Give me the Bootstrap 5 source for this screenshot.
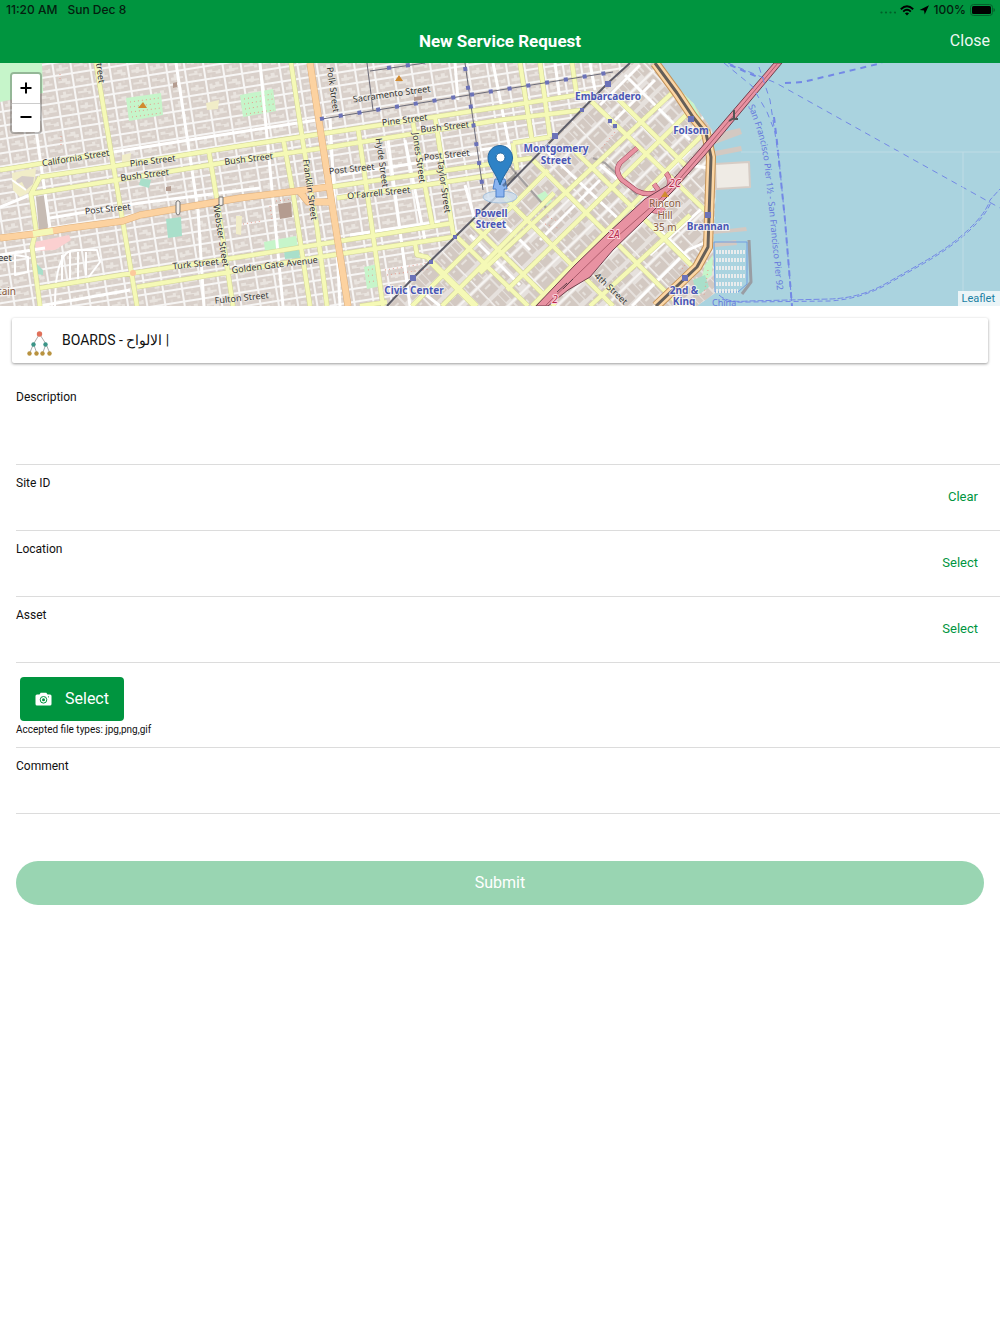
<!DOCTYPE html>
<html lang="en">
<head>
<meta charset="utf-8">
<meta name="viewport" content="width=device-width, initial-scale=1">
<title>New Service Request</title>
<link href="https://cdn.jsdelivr.net/npm/bootstrap@5.3.0/dist/css/bootstrap.min.css" rel="stylesheet">
<style>
  :root { --brand: #00953f; }
  body { font-family: Roboto, "Noto Sans", sans-serif; font-size: 14px; color: #111; background: #fff; }
  .status-bar { height: 20px; padding: 0 5px 0 6px; font: 500 12px/20px Inter, sans-serif; color: #04200f; }
  .clock-set { gap: 10px; }
  .app-head { background: var(--brand); }
  .title-bar { height: 43px; display: grid; grid-template-columns: 1fr auto 1fr; align-items: center; padding: 0 10px 2px; }
  .title-bar h1 { font-size: 17px; line-height: 20px; font-weight: 700; margin: 0; color: #fff; grid-column: 2; }
  .close-btn { color: #fff; font-size: 16px; line-height: 20px; padding: 0; border: 0; justify-self: end; opacity: .93; }
  .map-box { height: 243px; background: #aad3df; overflow: hidden; }
  .map-box > svg { width: 100%; height: 100%; display: block; }
  .zoom-ctl { top: 9px; left: 10px; border: 2px solid rgba(0,0,0,.25); border-radius: 4px; background-clip: padding-box; overflow: hidden; }
  .zoom-ctl button { width: 28px; height: 29px; border: 0; background: #fff; color: #000; display: grid; place-items: center; padding: 0 0 2px; }
  .zoom-ctl button + button { border-top: 1px solid #ccc; }
  .credit { right: 0; bottom: 0; background: rgba(255,255,255,.75); font-size: 11px; line-height: 15px; padding: 0 5px 0 4px; color: #1a7fa3; text-decoration: none; }
  .type-card { margin: 12px 12px 0; height: 45px; border: 0; border-radius: 2px; background: #fff; box-shadow: 0 1px 3px rgba(0,0,0,.4); padding: 0 14px; gap: 9px; color: #111; font-size: 14px; text-align: left; }
  .type-card svg { margin-top: 6px; }
  .field-row { margin-left: 16px; padding: 11px 22px 0 0; height: 66px; border-bottom: 1px solid #dcdcdc; }
  .field-row label { font-size: 12px; line-height: 14px; }
  .field-row .form-control { border: 0; padding: 0; border-radius: 0; font-size: 14px; box-shadow: none; background: transparent; resize: none; }
  .row-tall { height: 95px; margin-top: 7px; padding-top: 20px; }
  .row-files { height: 85px; padding: 14px 0 0; }
  .text-action { border: 0; background: none; color: var(--brand); font-size: 13px; line-height: 16px; padding: 0; margin-top: 13px; }
  .pick-btn { background: var(--brand); color: #fff; border: 0; border-radius: 4px; height: 44px; margin-left: 4px; padding: 0 15px; gap: 13px; font-size: 16px; }
  .hint { font-size: 10px; line-height: 12px; margin: 3px 0 0; }
  .send-btn { display: block; margin: 47px 16px 0; height: 44px; border: 0; border-radius: 22px; background: #99d5b2; color: #fff; font-size: 16px; }
  /* map drawing */
  .map-box path, .map-box line { fill: none; stroke-linejoin: round; }
  .map-box .solid { stroke: none; }
  .yc { stroke: #d3d698; stroke-width: 5; } .yf { stroke: #f5f9b6; stroke-width: 4; }
  .oc { stroke: #dfb07c; stroke-width: 7; } .of { stroke: #fcd2a0; stroke-width: 6; }
  .wf { stroke: #fff; stroke-width: 3; }
  .rail { stroke: #6b6b78; stroke-width: 1; } .ferry { stroke: #7388e6; stroke-width: 1; stroke-dasharray: 6 5; }
  .st { font: 9px "Noto Sans", sans-serif; fill: #333; text-anchor: middle; stroke: #f8f6ee; stroke-width: 1px; stroke-opacity: .6; paint-order: stroke; }
  .stn { font: bold 10px "Noto Sans", sans-serif; fill: #4a57b5; text-anchor: middle; stroke: #fff; stroke-width: 2px; stroke-opacity: .7; paint-order: stroke; }
  .hill { font: 10px "Noto Sans", sans-serif; fill: #8a5d3f; text-anchor: middle; stroke: #fff; stroke-width: 2px; stroke-opacity: .5; paint-order: stroke; }
  .hwy { font: italic 10px "Noto Sans", sans-serif; fill: #b8284c; text-anchor: middle; stroke: #fbd5dd; stroke-width: 2px; paint-order: stroke; }
  .sea { font: 9px "Noto Sans", sans-serif; fill: #6679dc; }
</style>
<script src="https://cdn.jsdelivr.net/npm/bootstrap@5.3.0/dist/js/bootstrap.bundle.min.js"></script>
</head>
<body>
<header class="app-head">
  <div class="status-bar d-flex justify-content-between">
    <div class="clock-set d-flex"><span>11:20 AM</span><span>Sun Dec 8</span></div>
    <div class="d-flex align-items-center gap-1">
      <svg width="16" height="10" viewBox="0 0 16 10" fill="#04200f" opacity=".45"><circle cx="1.5" cy="7.500" r="1.1"/><circle cx="6" cy="7.500" r="1.1"/><circle cx="10.500" cy="7.500" r="1.1"/><circle cx="15" cy="7.500" r="1.1"/></svg>
      <svg width="14" height="11" viewBox="0 0 14 11" fill="none" stroke="#000" stroke-width="1.9"><path d="M.8 4.200Q7-1.600 13.200 4.200M3.200 6.600Q7 3 10.800 6.600"/><path d="M7 10.500 4.900 8.300Q7 6.600 9.100 8.300Z" fill="#000" stroke="none"/></svg>
      <svg width="12" height="10" viewBox="0 0 12 10"><path d="M11 .3 6.700 9.600 6 5.400 1.600 4.900Z" fill="#000"/></svg>
      <span>100%</span>
      <svg width="25" height="12" viewBox="0 0 25 12"><rect x=".5" y=".5" width="22" height="11" rx="3" fill="none" stroke="#04602c"/><rect x="2" y="2" width="19" height="8" rx="1.500"/><path d="M23.500 4v4q1.500-.6 1.500-2T23.500 4Z" fill="#04602c"/></svg>
    </div>
  </div>
  <div class="title-bar">
    <h1>New Service Request</h1>
    <button type="button" class="btn close-btn">Close</button>
  </div>
</header>

<main>
  <section class="map-box position-relative" aria-label="Map">
    <svg viewBox="0 63 1000 243" preserveAspectRatio="xMidYMid slice">
      <defs>
        <!-- residential city blocks -->
        <pattern id="blocks" width="56" height="27" patternUnits="userSpaceOnUse" patternTransform="translate(4 2) rotate(-9)">
          <rect width="56" height="27" fill="#f7f6f5"/>
          <g fill="#d9d0ca"><rect x="1" y="1" width="17" height="12"/><rect x="20" y="1" width="17" height="12"/><rect x="39" y="1" width="16" height="12"/><rect x="1" y="15" width="17" height="11"/><rect x="20" y="15" width="17" height="11"/><rect x="39" y="15" width="16" height="11"/></g>
          <path class="solid" style="fill:#e9e4df" d="M3 6h5v-2h3v3h5v2h-6v1h-3v-1h-4zM22 5h3v2h3v-3h4v3h3v2h-8v1h-5zM41 6h4v-2h5v3h3v3h-5v-2h-7zM3 19h6v-2h3v3h4v3h-3v-2h-10zM22 18h5v2h6v-1h2v4h-5v-2h-8zM41 20h3v-3h3v3h6v2h-4v1h-8z"/>
          <path d="M5 1v3M14 10v3M24 10v3M33 1v3M43 1v3M51 10v3M7 23v3M13 15v3M29 15v2M25 23v3M45 23v3M50 15v3" stroke="#e4ddd7" stroke-width="1"/>
        </pattern>
        <!-- larger blocks turned to the Market Street grid -->
        <pattern id="soma" width="46" height="34" patternUnits="userSpaceOnUse" patternTransform="translate(12 5) rotate(-44)">
          <rect width="46" height="34" fill="#e6e1dd"/>
          <g fill="#d3c9c2"><rect x="1" y="2" width="9" height="13"/><rect x="11" y="2" width="5" height="11"/><rect x="17" y="2" width="11" height="13"/><rect x="30" y="2" width="6" height="9"/><rect x="37" y="2" width="8" height="13"/><rect x="1" y="19" width="14" height="13"/><rect x="17" y="19" width="6" height="12"/><rect x="24" y="22" width="10" height="10"/><rect x="36" y="19" width="9" height="13"/></g>
          <path d="M0 17h46M0 0v34" stroke="#f6f4f2" stroke-width="2"/>
          <path d="M4 5v5M20 7h5M40 5v6M5 23h7M27 25v4M39 23h3" stroke="#e6e1dc" stroke-width="2"/>
        </pattern>
        <path id="yellow" d="M0 170 113 152M40 177 115 166 240 146 500 107 590 93M30 194 117 180 240 160 330 147 500 120 583 110M96 63 137 306M40 177 31 194 36 230 32 247 40 306M209 152 217 200 233 306M40 288 133 273 240 257 453 223M137 287 230 272 320 257 453 237M291 63 303 143 317 227 327 306M283 138 293 193 310 306M330 187 532 158M337 198 493 175M358 128 383 306M413 123 433 228M435 117 453 233 528 306M415 243 417 255 427 257 477 306M520 63 532 140M540 63 550 137M572 63 577 97M513 143 550 137M513 143 517 170M360 306 387 302"/>
        <path id="yellowSoma" d="M442 306 554 193M480 273 673 92M507 290 686 115M532 306 703 134M590 306 690 215M412 306 548 170M533 160 680 306M570 146 696 270M590 100 710 215M618 99 690 170M500 193 613 306M470 222 555 306M430 262 474 306"/>
        <path id="geary" d="M0 238 33 234 70 228 123 221 140 215 240 198 297 191 328 187M300 192 308 202 332 202M310 63 323 147 348 306"/>
        <path id="embarc" d="M655 63 677 93 693 117 706 133 711 157 708 247 697 267 656 306"/>
        <path id="loop" d="M637 148 620 163Q614 171 622 180L637 191Q648 197 665 190M666 173Q672 180 668 188M654 184 659 191M650 202 651 210Q659 213 664 208"/>
        <path id="pierRoute" d="M748 106Q762 138 765 170 769 210 773 250L779 309"/>
      </defs>

      <rect y="63" width="1000" height="243" fill="#aad3df"/>
      <path class="solid" style="fill:url(#blocks)" d="M0 63H660L680 90 693 103 712 130 716 183 713 247 715 293 697 306H0Z"/>
      <path class="solid" style="fill:url(#soma)" d="M387 306 630 63H660L680 90 693 103 712 130 716 183 713 247 715 293 697 306Z"/>

      <!-- parks and special sites -->
      <path class="solid" style="fill:#c6f5ca" d="M0 63H42L43 93 0 102ZM126 98 161 93 163 115 129 121ZM240 95 273 89 276 111 243 117ZM364 267 378 264 381 286 367 289ZM264 242 296 236 298 246 265 251ZM536 196 545 191 552 201 543 208ZM680 90 694 104 702 120 696 116ZM713 255 712 275 700 285 705 265Z"/>
      <path class="solid" style="fill:#a9dfca" d="M166 219 181 217 182 236 168 238ZM141 178 151 180 149 188 139 185ZM284 251 299 249 300 258 285 259ZM37 264 43 270 43 275 37 274ZM693 280 705 275 709 287 697 296Z"/>
      <path class="solid" style="fill:#fbd0d0" d="M35 242 69 235 71 240 55 250 36 251Z"/>
      <path class="solid" style="fill:#f1edc8" d="M12 173 36 168 34 190 20 197 13 190ZM236 216 242 216 241 235 236 234ZM206 103 219 100 218 109 207 110ZM122 155 131 153 130 163 122 163Z"/>
      <path class="solid" style="fill:#c6bbb3" d="M36 197 46 195 48 231 39 231Z"/>
      <path class="solid" style="fill:#b49c90" d="M278 204 291 202 292 217 280 219ZM414 97 422 96 422 100 414 101ZM173 83 177 82 177 87 173 88ZM166 187 171 186 171 191 166 191Z"/>
      <path class="solid" style="fill:#d6cdc8" d="M16 180 22 176 34 177 33 184 26 190 22 182 17 184Z"/>
      <g stroke="#e79a8c" stroke-width="1" stroke-dasharray="1 3"><path d="M130 102 159 98M130 107 161 103M131 112 161 108M132 117 161 113M244 99 272 94M244 104 273 99M245 109 274 104M246 114 274 110M368 270 378 268M368 276 379 274M369 282 380 280M243 224 262 221M385 270 435 262M387 275 430 269M270 206 272 220M276 201 293 199M60 74V82M61 136V146M540 214 560 222M545 224 558 228M615 132 600 150M708 270 704 295M685 265 680 272"/></g>
      <path class="solid" style="fill:#d18b31" d="M138 108 143 102 147 108ZM395 81 399 75 403 81Z"/>

      <!-- local streets -->
      <path class="wf" d="M113 152 240 132 330 118M50 218 140 203 260 188M176 63 198 210 204 306M36 130 50 228M0 207 30 195M330 118 340 306M388 140 410 306M405 140 425 240M340 175 480 153M465 185 475 220M350 235 440 222M0 255 45 248M40 306 130 290M455 63 458 100M493 63 512 160M260 63 283 306M555 63 560 100M590 63 595 90M480 150 515 145"/>
      <path class="wf" d="M500 220 530 250M540 145 625 225M625 75 690 140M640 65 600 105M655 80 610 125M690 150 640 200M708 168 690 165 635 225M708 203 650 255M704 243 688 250 632 306M420 290 440 306M540 240 600 180M600 165 618 180M470 235 520 285M660 230 690 260"/>
      <path d="M55 306Q55 250 75 250L97 250 100 262 88 278M62 255V280M70 252V280M78 252V280M86 252V275M12 180 26 190M15 255V275L28 272V257Z" stroke="#fff" stroke-width="2"/>
      <path d="M593 158 605 163 616 173 637 195M505 160 520 178 548 210" stroke="#a4a0a0" stroke-width="2"/>

      <use href="#yellow" class="yc"/><use href="#yellowSoma" class="yc"/><use href="#yellow" class="yf"/><use href="#yellowSoma" class="yf"/>
      <use href="#geary" class="oc"/><use href="#geary" class="of"/>
      <path d="M33 234 53 231" stroke="#f4f8b8" stroke-width="6"/>
      <circle cx="133" cy="273" r="3" fill="#fcc99c"/>
      <path d="M176 202V212Q176 215 178 215T180 212V202Q178 199 176 202ZM219 197V206L223 205V197Z" style="fill:#f4efe9" stroke="#777" stroke-width="1"/>

      <!-- rail and cable car -->
      <path class="rail" d="M322 119 500 90 613 72M465 63 483 190M367 63 373 110M370 71 425 63"/>
      <path d="M387 306 413 278 500 193 555 137 608 83 630 63" stroke="#5d5d68" stroke-width="2"/>
      <g stroke="#6b72b8" stroke-width="4"><path style="stroke-dasharray:4 15" d="M320 119 500 90 613 72M465 67 483 190M387 68 425 63"/></g>
      <g fill="#6b72b8"><rect x="410" y="275" width="6" height="6"/><rect x="552" y="133" width="6" height="6"/><rect x="605" y="81" width="6" height="6"/><rect x="453" y="235" width="4" height="4"/><rect x="429" y="260" width="4" height="4"/><rect x="580" y="108" width="4" height="4"/><rect x="608" y="119" width="4" height="4"/><rect x="613" y="124" width="4" height="4"/></g>

      <!-- piers -->
      <path class="solid" style="fill:#d3c9c2" d="M714 134 740 128 742 134 715 144ZM715 151 741 146 742 151 716 156ZM712 231 746 227 747 231 713 234ZM714 243 736 240 737 245 714 247Z"/>
      <path d="M715 164 749 162 750 187 716 189Z" style="fill:#efebe5" stroke="#d6ccc5" stroke-width="2"/>
      <path d="M749 240 751 282 742 294" stroke="#999da3" stroke-width="3"/>
      <path d="M714 242H747V284L738 292H715Z" stroke="#739de0" stroke-width="1"/>
      <path d="M716 252H746M716 260H746M716 268H746M716 276H746M716 284H743M716 291H738" stroke="#e9eced" stroke-width="4" stroke-dasharray="2 1"/>

      <!-- waterfront and freeway -->
      <use href="#embarc" stroke="#c39257" stroke-width="10"/><use href="#embarc" stroke="#fcd6a4" stroke-width="8"/><use href="#embarc" stroke="#665f58" stroke-width="3"/>
      <use href="#loop" stroke="#9c4458" stroke-width="5"/><use href="#loop" stroke="#e892a2" stroke-width="4"/>
      <path d="M774 63H782L705 155 672 192 642 222 613 250 590 277 568 290 548 306H536L575 265 608 233 645 199 668 185 700 149Z" style="fill:#e892a2" stroke="#70404d" stroke-width="1"/>
      <path d="M778 63 702 153 670 190 610 243 545 306" stroke="#ad5c6c" stroke-width="1"/>
      <path d="M573 279 563 289M567 283 557 292" stroke="#604049" stroke-width="1"/>
      <path d="M734 110V119H738M734 118 729 121" stroke="#555" stroke-width="2"/>
      <g fill="#6b72b8"><rect x="688" y="116" width="6" height="6"/><rect x="705" y="212" width="6" height="6"/><rect x="682" y="275" width="6" height="6"/></g>
      <path class="solid" style="fill:#d18b31" d="M661 197 665 191 669 197Z"/>

      <!-- ferry routes and tile seams -->
      <path class="ferry" d="M724 63 752 86 767 112 773 127M759 67 770 100 779 160 785 220 792 306M728 63 776 83 1000 208"/>
      <path class="ferry" style="stroke-width:2" d="M774 117 777 142 785 220 792 306M730 65 760 78M785 83 803 82 882 63"/>
      <path class="ferry" style="stroke-dasharray:6 2" d="M719 295Q727 303 748 301L830 299Q860 298 885 284L920 264Q950 247 968 230T990 200L1000 189"/>
      <path class="ferry" style="stroke-dasharray:5 3" d="M722 299Q730 303 748 302L830 301Q860 299 886 285L921 265Q951 248 969 231T991 202"/>
      <path d="M741 152H1000M963 152V306" stroke="#bfdce5" stroke-width="1"/>

      <g class="st">
        <text transform="translate(76 161) rotate(-9)">California Street</text><text transform="translate(153 164) rotate(-7)">Pine Street</text><text transform="translate(145 178) rotate(-7)">Bush Street</text><text transform="translate(249 162) rotate(-7)">Bush Street</text>
        <text transform="translate(108 212) rotate(-6)">Post Street</text><text transform="translate(196 267) rotate(-6)">Turk Street</text><text transform="translate(275 268) rotate(-7)">Golden Gate Avenue</text><text transform="translate(242 301) rotate(-6)">Fulton Street</text>
        <text transform="translate(97 71) rotate(82)">Street</text><text transform="translate(218 236) rotate(81)">Webster Street</text><text transform="translate(307 190) rotate(82)">Franklin Street</text><text transform="translate(330 90) rotate(82)">Polk Street</text>
        <text transform="translate(392 97) rotate(-8)">Sacramento Street</text><text transform="translate(405 123) rotate(-7)">Pine Street</text><text transform="translate(445 130) rotate(-6)">Bush Street</text><text transform="translate(447 158) rotate(-6)">Post Street</text><text transform="translate(352 172) rotate(-6)">Post Street</text>
        <text transform="translate(379 196) rotate(-6)">O'Farrell Street</text><text transform="translate(379 163) rotate(82)">Hyde Street</text><text transform="translate(416 158) rotate(82)">Jones Street</text><text transform="translate(441 187) rotate(82)">Taylor Street</text>
        <text transform="translate(609 291) rotate(43)">4th Street</text><text x="5" y="261">eet</text>
      </g>
      <g class="stn"><text x="608" y="100">Embarcadero</text><text x="556" y="152">Montgomery</text><text x="556" y="164">Street</text><text x="691" y="134">Folsom</text><text x="491" y="217">Powell</text><text x="491" y="228">Street</text><text x="708" y="230">Brannan</text><text x="684" y="294">2nd &amp;</text><text x="684" y="305">King</text><text x="414" y="294">Civic Center</text></g>
      <g class="hill"><text x="665" y="207">Rincon</text><text x="665" y="219">Hill</text><text x="665" y="231">35 m</text><text x="7" y="295">tain</text></g>
      <g class="hwy"><text x="614" y="238">2A</text><text x="675" y="187">2C</text><text x="555" y="303">2</text></g>
      <text class="sea" x="712" y="306" font-style="italic">China</text>
      <text class="sea"><textPath href="#pierRoute">San Francisco Pier 1½ - San Francisco Pier 92</textPath></text>

      <!-- current position and marker -->
      <ellipse cx="500" cy="197" rx="17" ry="6" fill="#cfe0f0" fill-opacity=".8" stroke="#a9c3dc"/>
      <path d="M495 179H505L507 189H504V197H496V189H493Z" style="fill:#8ab4f0" stroke="#4f80c9" stroke-width="1"/>
      <path d="M502 185 517 171 515 177 504 187Z" class="solid" style="fill:rgba(0,0,0,.3)"/>
      <path d="M500 145.500C493 145.500 488 151 488 158 488 166 496 173 500 185 504 173 512.500 166 512.500 158 512.500 151 507 145.500 500 145.500Z" style="fill:#2e82c6" stroke="#2568a0" stroke-width="1"/>
      <circle cx="500.500" cy="157.500" r="4.500" fill="#fff" stroke="#2568a0"/>
    </svg>
    <div class="zoom-ctl position-absolute">
      <button type="button" aria-label="Zoom in"><svg width="12" height="12" viewBox="0 0 12 12" stroke="#000" stroke-width="2"><path d="M6 .500V11.500M.500 6H11.500"/></svg></button>
      <button type="button" aria-label="Zoom out"><svg width="12" height="12" viewBox="0 0 12 12" stroke="#000" stroke-width="2"><path d="M.500 6H11.500"/></svg></button>
    </div>
    <a href="#" class="credit position-absolute">Leaflet</a>
  </section>

  <form>
    <div class="type-card d-flex align-items-center">
      <svg width="27" height="27" viewBox="0 0 27 27"><path d="M13.500 4 7.500 14M13.500 4 20 14M7.500 14 3.500 23.500M7.500 14 11 23.500M20 14 16.500 23.500M20 14 24 23.500" stroke="#aaa" fill="none"/><circle cx="13.500" cy="4" r="2.700" fill="#e0705a"/><g fill="#3b9487"><circle cx="7.500" cy="14.500" r="2.200"/><circle cx="19.500" cy="14.500" r="2.200"/></g><g fill="#b8923f"><circle cx="3.500" cy="23.500" r="2.200"/><circle cx="10.500" cy="23.500" r="2.200"/><circle cx="16.500" cy="23.500" r="2.200"/><circle cx="23.500" cy="23.500" r="2.200"/></g></svg>
      <span>BOARDS - <bdi>الالواح</bdi> |</span>
    </div>

    <div class="field-row row-tall">
      <label for="desc" class="d-block">Description</label>
      <textarea id="desc" class="form-control" rows="2"></textarea>
    </div>
    <div class="field-row d-flex justify-content-between align-items-start">
      <div class="flex-grow-1"><label for="site" class="d-block">Site ID</label><input id="site" class="form-control" type="text"></div>
      <button type="button" class="text-action">Clear</button>
    </div>
    <div class="field-row d-flex justify-content-between align-items-start">
      <div class="flex-grow-1"><label for="loc" class="d-block">Location</label><input id="loc" class="form-control" type="text"></div>
      <button type="button" class="text-action">Select</button>
    </div>
    <div class="field-row d-flex justify-content-between align-items-start">
      <div class="flex-grow-1"><label for="asset" class="d-block">Asset</label><input id="asset" class="form-control" type="text"></div>
      <button type="button" class="text-action">Select</button>
    </div>
    <div class="field-row row-files">
      <button type="button" class="pick-btn d-flex align-items-center">
        <svg width="17" height="14" viewBox="0 0 17 14"><path d="M2 2.500H4.500L5.700.8H11.300L12.500 2.500H15Q16.500 2.500 16.500 4V12Q16.500 13.500 15 13.500H2Q.500 13.500.500 12V4Q.500 2.500 2 2.500Z" fill="#fff"/><circle cx="8.500" cy="7.800" r="3.300" fill="none" stroke="#00953f"/><circle cx="8.500" cy="7.800" r="1.500" fill="#00953f"/><circle cx="13.500" cy="4.800" r=".6" fill="#00953f"/></svg>
        <span>Select</span>
      </button>
      <p class="hint">Accepted file types: jpg,png,gif</p>
    </div>
    <div class="field-row">
      <label for="comment" class="d-block">Comment</label>
      <input id="comment" class="form-control" type="text">
    </div>
    <div class="d-grid"><button type="submit" class="send-btn">Submit</button></div>
  </form>
</main>
</body>
</html>
